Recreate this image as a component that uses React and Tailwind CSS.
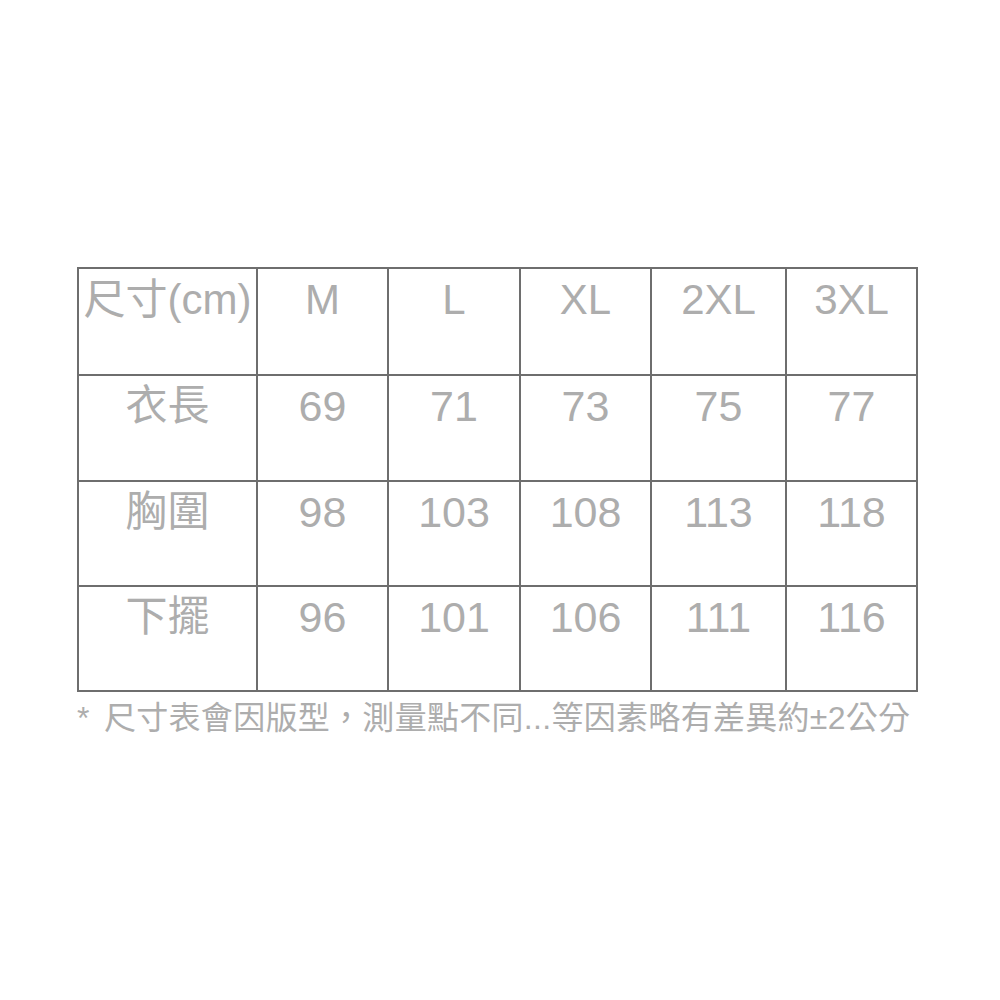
import React from "react";

const headers = ["尺寸(cm)", "M", "L", "XL", "2XL", "3XL"];

const rows = [
  ["衣長", "69", "71", "73", "75", "77"],
  ["胸圍", "98", "103", "108", "113", "118"],
  ["下擺", "96", "101", "106", "111", "116"],
];

export default function App() {
  return (
    <div className="min-h-screen bg-white pt-[267px] pl-[77px] font-['Liberation_Sans','Noto_Sans_CJK_TC',sans-serif] text-[#adadad]">
      <div className="inline-grid grid-cols-[177px_129px_130px_129px_133px_129px] grid-rows-[105px_104px_103px_103px] gap-[2px] p-[2px] bg-[#6e6e6e]">
        {headers.map((h) => (
          <div
            key={h}
            className="bg-white text-center pt-[10px] text-[42px] leading-[42px] whitespace-nowrap"
          >
            {h}
          </div>
        ))}
        {rows.map((row) =>
          row.map((cell, i) => (
            <div
              key={row[0] + i}
              className={
                i === 0
                  ? "bg-white text-center pt-[9px] text-[42px] leading-[42px] whitespace-nowrap"
                  : "bg-white text-center pt-[9px] text-[43px] leading-[42px] whitespace-nowrap"
              }
            >
              {cell}
            </div>
          ))
        )}
      </div>
      <div className="mt-[6px] text-[32px] leading-[40px] tracking-[0.3px] whitespace-nowrap">
        <span className="mr-[5px]">*</span> 尺寸表會因版型，測量點不同...等因素略有差異約±2公分
      </div>
    </div>
  );
}
